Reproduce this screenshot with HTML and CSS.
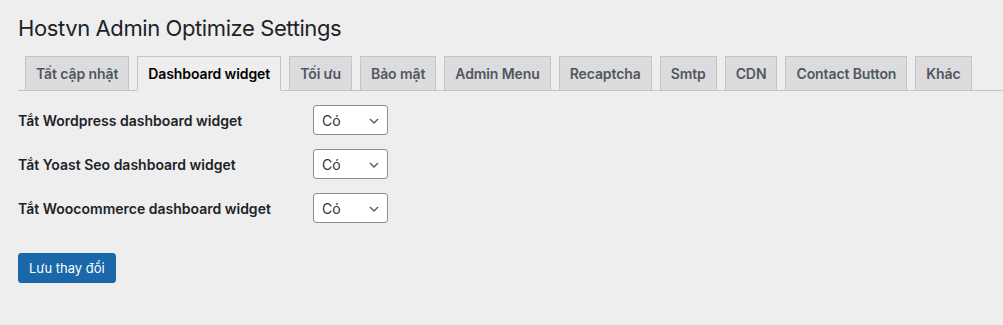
FILE: index.html
```html
<!DOCTYPE html>
<html lang="vi">
<head>
  <meta charset="utf-8">
  <link rel="stylesheet" href="styles.css">
</head>
<body>
  <div class="wrap">
    <h1 class="page-title">Hostvn Admin Optimize Settings</h1>
    <nav class="nav-tab-wrapper">
      <a class="nav-tab" href="#">Tất cập nhật</a>
      <a class="nav-tab nav-tab-active" href="#">Dashboard widget</a>
      <a class="nav-tab" href="#">Tối ưu</a>
      <a class="nav-tab" href="#">Bảo mật</a>
      <a class="nav-tab" href="#">Admin Menu</a>
      <a class="nav-tab" href="#">Recaptcha</a>
      <a class="nav-tab" href="#">Smtp</a>
      <a class="nav-tab" href="#">CDN</a>
      <a class="nav-tab" href="#">Contact Button</a>
      <a class="nav-tab" href="#">Khác</a>
    </nav>
    <form class="form-table">
      <div class="form-row">
        <label class="form-label">Tắt Wordpress dashboard widget</label>
        <select class="select"><option>Có</option><option>Không</option></select>
      </div>
      <div class="form-row">
        <label class="form-label">Tắt Yoast Seo dashboard widget</label>
        <select class="select"><option>Có</option><option>Không</option></select>
      </div>
      <div class="form-row">
        <label class="form-label">Tắt Woocommerce dashboard widget</label>
        <select class="select"><option>Có</option><option>Không</option></select>
      </div>
      <button type="button" class="button-primary">Lưu thay đổi</button>
    </form>
  </div>
</body>
</html>
```

FILE: styles.css
```css
body {
  margin: 0;
  background: #eeeeee;
  color: #1d2327;
  font-family: Inter, "Noto Sans", sans-serif;
}

.wrap {
  padding: 13px 0 0 18px;
}

.page-title {
  margin: 0;
  font-size: 22px;
  font-weight: 400;
  line-height: 30px;
  letter-spacing: -0.4px;
}

.nav-tab-wrapper {
  display: flex;
  gap: 8px;
  margin-top: 13px;
  padding-left: 7px;
  border-bottom: 1px solid #c3c4c7;
}

.nav-tab {
  margin-bottom: -1px;
  padding: 5px 10px;
  font-size: 14px;
  font-weight: 600;
  line-height: 23px;
  letter-spacing: -0.1px;
  color: #50575e;
  text-decoration: none;
  background: #dcdcde;
  border: 1px solid #c3c4c7;
}

.nav-tab-active {
  color: #000;
  background: #eeeeee;
  border-bottom-color: #eeeeee;
}

.form-table {
  padding-top: 7px;
}

.form-row {
  display: flex;
  align-items: center;
  height: 44px;
}

.form-label {
  width: 295px;
  font-size: 14px;
  font-weight: 600;
}

.select {
  width: 75px;
  height: 30px;
  padding: 0 24px 0 8px;
  font-family: inherit;
  font-size: 14px;
  color: #2c3338;
  border: 1px solid #8c8f94;
  border-radius: 3px;
  appearance: none;
  background: #fff url('data:image/svg+xml;utf8,<svg xmlns="http://www.w3.org/2000/svg" width="20" height="20" viewBox="0 0 20 20"><path d="M5 7.5l5 5 5-5" fill="none" stroke="%23555" stroke-width="1.6"/></svg>') no-repeat right 5px top 55%;
  background-size: 16px 16px;
}

.button-primary {
  margin-top: 23px;
  height: 30px;
  padding: 0 10px;
  font-family: inherit;
  font-size: 13px;
  color: #fff;
  background: #1a67aa;
  border: 1px solid #1a67aa;
  border-radius: 3px;
}
```
